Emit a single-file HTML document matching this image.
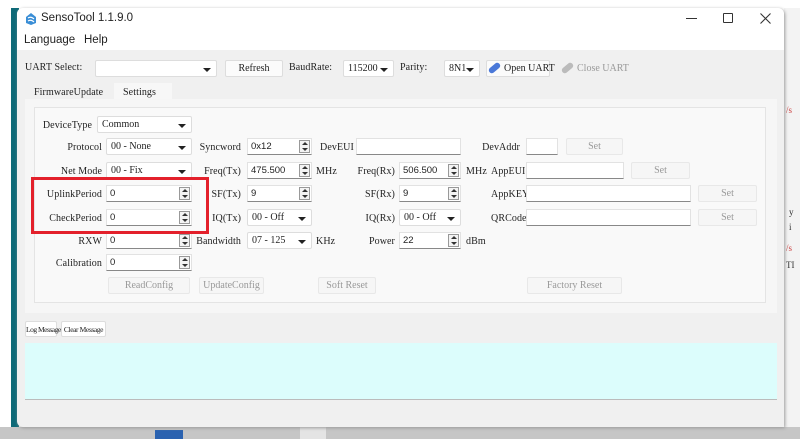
<!DOCTYPE html>
<html><head><meta charset="utf-8"><style>
*{box-sizing:border-box;margin:0;padding:0}
body{width:800px;height:439px;overflow:hidden;background:#fff;position:relative;font-family:"Liberation Serif",serif;font-size:10px;color:#222}
.a{position:absolute;white-space:nowrap}
.l{position:absolute;white-space:nowrap;font-size:10px;color:#222;letter-spacing:0.1px}
.in{position:absolute;background:#fff;border:1px solid #e2e2e2;border-bottom:1px solid #888;height:17px;font-family:"Liberation Sans",sans-serif;font-size:9.5px;padding:2px 3px;color:#222}
.cb{position:absolute;background:#fff;border:1px solid #ddd;border-radius:2px;height:17px;font-size:10px;padding:2px 4px;color:#222;white-space:nowrap}
.cb:after{content:"";position:absolute;right:5px;top:7px;border-left:4px solid transparent;border-right:4px solid transparent;border-top:4px solid #222}
.sp{position:absolute;right:1px;top:1px;width:11px;height:13px;border:1px solid #999;background:#f4f4f4}
.sp:before{content:"";position:absolute;left:2px;top:1px;border-left:3px solid transparent;border-right:3px solid transparent;border-bottom:3px solid #333}
.sp:after{content:"";position:absolute;left:2px;top:7px;border-left:3px solid transparent;border-right:3px solid transparent;border-top:3px solid #333}
.bt{position:absolute;background:#fbfbfb;border:1px solid #ddd;border-radius:2px;height:17px;text-align:center;font-size:10px;padding-top:2px;color:#222;white-space:nowrap}
.dis{color:#999;background:#f6f6f6;border-color:#e8e8e8}
</style></head><body>
<div class="a" style="left:784px;top:8px;width:16px;height:431px;background:#f3f3f3"></div>
<div class="a" style="left:786px;top:105px;color:#c44;font-size:9px">/s</div>
<div class="a" style="left:789px;top:207px;color:#333;font-size:9px">y</div>
<div class="a" style="left:789px;top:222px;color:#333;font-size:9px">i</div>
<div class="a" style="left:786px;top:243px;color:#c44;font-size:9px">/s</div>
<div class="a" style="left:786px;top:260px;color:#333;font-size:9px">TI</div>
<div class="a" style="left:0;top:427px;width:800px;height:12px;background:#c6c6c6"></div>
<div class="a" style="left:155px;top:430px;width:28px;height:9px;background:#2a62b0"></div>
<div class="a" style="left:300px;top:427px;width:26px;height:12px;background:#e4e4e4"></div>
<div class="a" style="left:11px;top:8px;width:8px;height:419px;background:#0e6a78"></div>
<div class="a" style="left:17px;top:8px;width:767px;height:419px;background:#f0f0f0;border-radius:6px 6px 0 6px;box-shadow:1px 1px 3px #999"></div>
<div class="a" style="left:17px;top:8px;width:767px;height:42px;background:#fff;border-radius:6px 6px 0 0"></div>
<svg class="a" style="left:24px;top:12px" width="14" height="14" viewBox="0 0 14 14"><path d="M7 1 L12 5 L12 11 L7 13 L2 11 L2 5 Z" fill="#3a8ed6"/><path d="M4 6 Q7 4 10 7 M4 9 Q7 7 10 10" stroke="#fff" stroke-width="1.2" fill="none"/></svg>
<div class="a" style="left:41px;top:12px;font-family:'Liberation Sans',sans-serif;font-size:11.5px;color:#222">SensoTool 1.1.9.0</div>
<div class="a" style="left:686px;top:18px;width:11px;height:1px;background:#333"></div>
<div class="a" style="left:723px;top:13px;width:10px;height:10px;border:1px solid #333;border-radius:1px"></div>
<svg class="a" style="left:760px;top:13px" width="11" height="11"><path d="M0.5 0.5L10.5 10.5M10.5 0.5L0.5 10.5" stroke="#333" stroke-width="1.1"/></svg>
<div class="a" style="left:24px;top:34px;font-family:'Liberation Sans',sans-serif;font-size:11.5px">Language</div>
<div class="a" style="left:84px;top:34px;font-family:'Liberation Sans',sans-serif;font-size:11.5px">Help</div>
<div class="l" style="left:25px;top:62px">UART Select:</div>
<div class="cb" style="left:95px;top:60px;width:122px"></div>
<div class="bt" style="left:225px;top:60px;width:58px">Refresh</div>
<div class="l" style="left:289px;top:62px">BaudRate:</div>
<div class="cb" style="left:343px;top:60px;width:51px">115200</div>
<div class="l" style="left:400px;top:62px">Parity:</div>
<div class="cb" style="left:444px;top:60px;width:36px">8N1</div>
<div class="bt" style="left:486px;top:60px;width:64px;text-align:left;padding-left:17px">Open UART</div>
<div class="a" style="left:488px;top:65px;width:13px;height:6px;background:#4a78d8;transform:rotate(-40deg);border-radius:3px"></div>
<div class="bt dis" style="left:559px;top:60px;width:68px;text-align:left;padding-left:17px;background:#f0f0f0;border-color:#f0f0f0">Close UART</div>
<div class="a" style="left:561px;top:65px;width:13px;height:6px;background:#bbb;transform:rotate(-40deg);border-radius:3px"></div>
<div class="l" style="left:34px;top:87px">FirmwareUpdate</div>
<div class="a" style="left:114px;top:83px;width:58px;height:17px;background:#f7f7f7"></div>
<div class="l" style="left:123px;top:87px">Settings</div>
<div class="a" style="left:25px;top:99px;width:752px;height:214px;background:#f6f6f6"></div>
<div class="a" style="left:34px;top:107px;width:732px;height:196px;background:#f9f9f9;border:1px solid #e4e4e4"></div>
<div class="l" style="right:708px;top:120px">DeviceType</div>
<div class="cb" style="left:97px;top:116px;width:95px">Common</div>
<div class="l" style="right:698px;top:142px">Protocol</div>
<div class="cb" style="left:106px;top:138px;width:86px">00 - None</div>
<div class="l" style="right:698px;top:166px">Net Mode</div>
<div class="cb" style="left:106px;top:162px;width:86px">00 - Fix</div>
<div class="l" style="right:698px;top:189px">UplinkPeriod</div>
<div class="in" style="left:106px;top:185px;width:86px">0<div class="sp"></div></div>
<div class="l" style="right:698px;top:213px">CheckPeriod</div>
<div class="in" style="left:106px;top:209px;width:86px">0<div class="sp"></div></div>
<div class="l" style="right:698px;top:236px">RXW</div>
<div class="in" style="left:106px;top:232px;width:86px">0<div class="sp"></div></div>
<div class="l" style="right:698px;top:258px">Calibration</div>
<div class="in" style="left:106px;top:254px;width:86px">0<div class="sp"></div></div>
<div class="l" style="right:559px;top:142px">Syncword</div>
<div class="in" style="left:247px;top:138px;width:65px">0x12<div class="sp"></div></div>
<div class="l" style="right:559px;top:166px">Freq(Tx)</div>
<div class="in" style="left:247px;top:162px;width:65px">475.500<div class="sp"></div></div>
<div class="l" style="left:316px;top:166px">MHz</div>
<div class="l" style="right:559px;top:189px">SF(Tx)</div>
<div class="in" style="left:247px;top:185px;width:65px">9<div class="sp"></div></div>
<div class="l" style="right:559px;top:213px">IQ(Tx)</div>
<div class="cb" style="left:247px;top:209px;width:65px">00 - Off</div>
<div class="l" style="right:559px;top:236px">Bandwidth</div>
<div class="cb" style="left:247px;top:232px;width:65px">07 - 125</div>
<div class="l" style="left:316px;top:236px">KHz</div>
<div class="l" style="left:320px;top:142px">DevEUI</div>
<div class="in" style="left:356px;top:138px;width:105px"></div>
<div class="l" style="right:405px;top:166px">Freq(Rx)</div>
<div class="in" style="left:399px;top:162px;width:62px">506.500<div class="sp"></div></div>
<div class="l" style="left:466px;top:166px">MHz</div>
<div class="l" style="right:405px;top:189px">SF(Rx)</div>
<div class="in" style="left:399px;top:185px;width:62px">9<div class="sp"></div></div>
<div class="l" style="right:405px;top:213px">IQ(Rx)</div>
<div class="cb" style="left:399px;top:209px;width:62px">00 - Off</div>
<div class="l" style="right:405px;top:236px">Power</div>
<div class="in" style="left:399px;top:232px;width:62px">22<div class="sp"></div></div>
<div class="l" style="left:466px;top:236px">dBm</div>
<div class="l" style="right:280px;top:142px">DevAddr</div>
<div class="in" style="left:526px;top:138px;width:32px"></div>
<div class="bt dis" style="left:566px;top:138px;width:57px">Set</div>
<div class="l" style="left:491px;top:166px">AppEUI</div>
<div class="in" style="left:526px;top:162px;width:98px"></div>
<div class="bt dis" style="left:631px;top:162px;width:59px">Set</div>
<div class="l" style="left:491px;top:189px">AppKEY</div>
<div class="in" style="left:526px;top:185px;width:165px"></div>
<div class="bt dis" style="left:698px;top:185px;width:59px">Set</div>
<div class="l" style="left:491px;top:213px">QRCode</div>
<div class="in" style="left:526px;top:209px;width:165px"></div>
<div class="bt dis" style="left:698px;top:209px;width:59px">Set</div>
<div class="bt dis" style="left:108px;top:277px;width:82px">ReadConfig</div>
<div class="bt dis" style="left:199px;top:277px;width:65px">UpdateConfig</div>
<div class="bt dis" style="left:318px;top:277px;width:58px">Soft Reset</div>
<div class="bt dis" style="left:527px;top:277px;width:95px">Factory Reset</div>
<div class="a" style="left:31px;top:177px;width:178px;height:57px;border:3px solid #e3202b"></div>
<div class="bt" style="left:25px;top:321px;width:32px;height:16px;font-size:7.5px;letter-spacing:-0.5px;background:#fff;padding-top:3px">Log Message</div>
<div class="bt" style="left:61px;top:321px;width:45px;height:16px;font-size:7.5px;letter-spacing:-0.4px;background:#fff;padding-top:3px">Clear Message</div>
<div class="a" style="left:25px;top:343px;width:752px;height:57px;background:#dcfdfc;border-bottom:1px solid #bbb"></div>
</body></html>
